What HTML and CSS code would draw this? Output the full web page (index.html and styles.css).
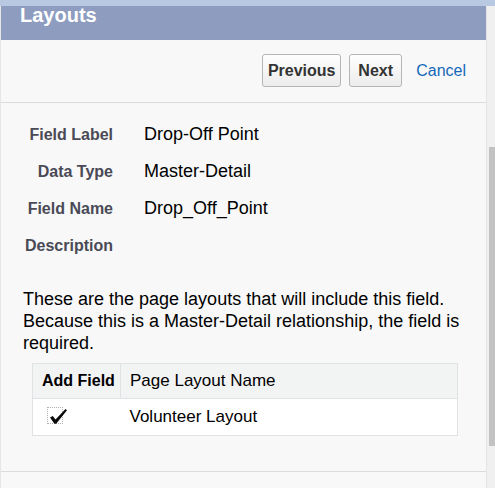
FILE: index.html
```html
<!DOCTYPE html>
<html>
<head>
<meta charset="utf-8">
<link rel="stylesheet" href="styles.css">
</head>
<body>
<div class="topstrip"></div>
<div class="frame">
  <div class="main">
    <div class="header">Layouts</div>
    <div class="buttonbar">
      <button class="btn btn-prev">Previous</button>
      <button class="btn btn-next">Next</button>
      <a class="cancel" href="#">Cancel</a>
    </div>
    <div class="fields">
      <div class="row"><span class="label">Field Label</span><span class="value">Drop-Off Point</span></div>
      <div class="row"><span class="label">Data Type</span><span class="value">Master-Detail</span></div>
      <div class="row"><span class="label">Field Name</span><span class="value">Drop_Off_Point</span></div>
      <div class="row"><span class="label">Description</span><span class="value"></span></div>
    </div>
    <p class="info">These are the page layouts that will include this field. Because this is a Master-Detail relationship, the field is required.</p>
    <table class="layouts">
      <thead>
        <tr><th class="col-add">Add Field</th><th class="col-name">Page Layout Name</th></tr>
      </thead>
      <tbody>
        <tr>
          <td class="col-add"><span class="check"><svg width="19" height="17" viewBox="0 0 19 17"><path d="M1 9.5 L3.8 8 L6.5 11.5 L16.5 1 L18 2.2 L7.2 15.8 L5.4 15.8 Z" fill="#0a0a0a"/></svg></span></td>
          <td class="col-name">Volunteer Layout</td>
        </tr>
      </tbody>
    </table>
    <div class="bottomline"></div>
  </div>
  <div class="scroll"><div class="thumb"></div></div>
</div>
</body>
</html>
```
FILE: styles.css
```css
html, body {
  margin: 0;
  padding: 0;
}
body {
  width: 495px;
  height: 488px;
  overflow: hidden;
  background: #f8f8f8;
  font-family: "Liberation Sans", Arial, sans-serif;
  color: #000;
}
.topstrip {
  height: 6px;
  background: #b9c9e2;
}
.frame {
  display: flex;
  height: 482px;
}
.main {
  width: 485px;
  border-left: 1px solid #e6e6e6;
  background: #f8f8f8;
}
.header {
  height: 34px;
  background: #8e9dbf;
  color: #fff;
  font-weight: bold;
  font-size: 20px;
  line-height: 18px;
  padding-left: 19px;
}
.buttonbar {
  display: flex;
  justify-content: flex-end;
  align-items: center;
  padding: 14px 20px 15px 0;
  border-bottom: 1px solid #dcdcdc;
}
.btn {
  height: 33px;
  box-sizing: border-box;
  border: 1px solid #b5b5b5;
  border-radius: 3px;
  background: linear-gradient(#fefefe, #ececec);
  font-family: "Liberation Sans", Arial, sans-serif;
  font-weight: bold;
  font-size: 16px;
  color: #333;
  padding: 1px 0 0;
  text-align: center;
}
.btn-prev { width: 79px; }
.btn-next { width: 53px; margin-left: 8px; }
.cancel {
  margin-left: 14px;
  font-size: 16px;
  color: #1468b8;
  text-decoration: none;
}
.fields {
  padding-top: 13px;
}
.row {
  display: flex;
  align-items: baseline;
  height: 37px;
  line-height: 37px;
}
.label {
  width: 112px;
  text-align: right;
  font-weight: bold;
  font-size: 16px;
  color: #4a4a56;
}
.value {
  margin-left: 31px;
  font-size: 18px;
  color: #000;
}
.info {
  margin: 24px 14px 9px 22px;
  font-size: 18px;
  line-height: 22px;
}
.layouts {
  margin-left: 31px;
  width: 426px;
  border-collapse: collapse;
  background: #fff;
  font-size: 17px;
}
.layouts th, .layouts td {
  border: 1px solid #e0e3e5;
  text-align: left;
  padding: 0 0 0 9px;
}
.layouts th {
  background: #f2f3f3;
  height: 34px;
  line-height: 34px;
  font-weight: normal;
}
.layouts th.col-add {
  font-weight: bold;
  font-size: 16px;
  width: 78px;
}
.layouts td {
  height: 36px;
  line-height: 36px;
}
.layouts td.col-add {
  border-right: none;
}
.layouts td.col-name {
  border-left: none;
}
.check {
  display: inline-block;
  position: relative;
  width: 14px;
  height: 15px;
  border: 1px dotted #b0b0b0;
  vertical-align: middle;
  margin-left: 5px;
  margin-top: -4px;
}
.check svg {
  position: absolute;
  left: 1px;
  top: 0;
}
.bottomline {
  margin-top: 35px;
  border-top: 1px solid #dcdcdc;
}
.scroll {
  flex: 1;
  border-left: 1px solid #e4e4e4;
  background: #f0f0f0;
  padding-top: 141px;
  padding-left: 2px;
}
.thumb {
  width: 6px;
  height: 299px;
  background: #c2c2c2;
}
```
